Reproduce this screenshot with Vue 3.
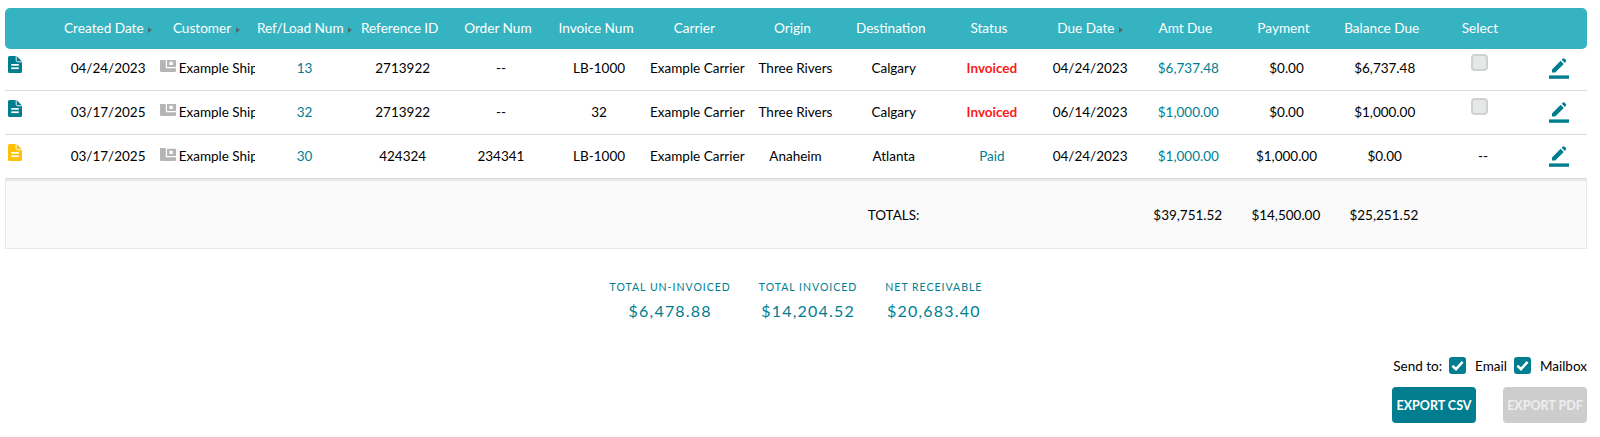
<template>
  <div class="page">
    <div class="ledger">
      <div class="row head">
        <div v-for="col in columns" :key="col.label" class="cell" :class="{ plain: !col.sort }">
          {{ col.label }}<span v-if="col.sort" class="sort"></span>
        </div>
      </div>
      <div v-for="row in rows" :key="row.ref" class="row body">
        <div class="cell doc-cell">
          <svg class="doc" :class="{ paid: row.status === 'Paid' }" viewBox="0 0 14 17">
            <path d="M1.5 0H8.6L14 5.4V15.5A1.5 1.5 0 0 1 12.5 17H1.5A1.5 1.5 0 0 1 0 15.5V1.5A1.5 1.5 0 0 1 1.5 0Z" fill="currentColor" />
            <path d="M8.2 0V4.4A1.4 1.4 0 0 0 9.6 5.8H14" fill="none" stroke="#fff" stroke-width="0.9" />
            <rect x="3.2" y="8" width="7.6" height="1.7" fill="#fff" />
            <rect x="3.2" y="11.4" width="7.6" height="1.7" fill="#fff" />
          </svg>
        </div>
        <div class="cell">{{ row.created }}</div>
        <div class="cell customer">
          <svg class="wallet" viewBox="0 0 16 16">
            <rect width="16" height="16" rx="1.2" fill="#b5b5b5" />
            <path d="M16 3.2H6.4V11.6H16" fill="none" stroke="#fff" stroke-width="1.2" />
            <rect x="9.4" y="5.8" width="3.4" height="3.2" fill="#fff" />
          </svg>
          <span class="ship">Example Shipper</span>
        </div>
        <div class="cell teal">{{ row.ref }}</div>
        <div class="cell">{{ row.referenceId }}</div>
        <div class="cell">{{ row.order }}</div>
        <div class="cell">{{ row.invoice }}</div>
        <div class="cell">Example Carrier</div>
        <div class="cell">{{ row.origin }}</div>
        <div class="cell">{{ row.destination }}</div>
        <div class="cell" :class="row.status === 'Paid' ? 'teal' : 'invoiced'">{{ row.status }}</div>
        <div class="cell">{{ row.due }}</div>
        <div class="cell teal">{{ row.amount }}</div>
        <div class="cell">{{ row.payment }}</div>
        <div class="cell">{{ row.balance }}</div>
        <div class="cell">
          <span v-if="row.selectable" class="select-box"></span>
          <span v-else>--</span>
        </div>
        <div class="cell">
          <svg class="edit" viewBox="0 0 20 21">
            <path d="M3 14.6V11.4L11.6 2.8L14.8 6L6.2 14.6ZM12.7 1.7L13.9 .5A1 1 0 0 1 15.3 .5L16.9 2.1A1 1 0 0 1 16.9 3.5L15.9 4.9Z" fill="currentColor" />
            <rect y="17.4" width="20" height="3.4" fill="currentColor" />
          </svg>
        </div>
      </div>
      <div class="row totals">
        <div class="total-label">TOTALS:</div>
        <div class="cell total-amt">$39,751.52</div>
        <div class="cell">$14,500.00</div>
        <div class="cell">$25,251.52</div>
      </div>
    </div>

    <div class="summary">
      <div v-for="item in summary" :key="item.label" class="stat">
        <div class="stat-label">{{ item.label }}</div>
        <div class="stat-value">{{ item.value }}</div>
      </div>
    </div>

    <div class="send">
      <span>Send to:</span>
      <span class="check"><svg viewBox="0 0 16 16"><path d="M3.2 8.2L6.6 11.4L12.8 4.6" fill="none" stroke="#fff" stroke-width="2.4" /></svg></span>
      <span class="opt">Email</span>
      <span class="check"><svg viewBox="0 0 16 16"><path d="M3.2 8.2L6.6 11.4L12.8 4.6" fill="none" stroke="#fff" stroke-width="2.4" /></svg></span>
      <span class="opt">Mailbox</span>
    </div>
    <div class="actions">
      <button class="btn">EXPORT CSV</button>
      <button class="btn off">EXPORT PDF</button>
    </div>
  </div>
</template>

<script setup>
const columns = [
  { label: '' },
  { label: 'Created Date', sort: true },
  { label: 'Customer', sort: true },
  { label: 'Ref/Load Num', sort: true },
  { label: 'Reference ID' },
  { label: 'Order Num' },
  { label: 'Invoice Num' },
  { label: 'Carrier' },
  { label: 'Origin' },
  { label: 'Destination' },
  { label: 'Status' },
  { label: 'Due Date', sort: true },
  { label: 'Amt Due' },
  { label: 'Payment' },
  { label: 'Balance Due' },
  { label: 'Select' },
  { label: ' ' },
];

const rows = [
  {
    created: '04/24/2023', ref: '13', referenceId: '2713922', order: '--', invoice: 'LB-1000',
    origin: 'Three Rivers', destination: 'Calgary', status: 'Invoiced', due: '04/24/2023',
    amount: '$6,737.48', payment: '$0.00', balance: '$6,737.48', selectable: true,
  },
  {
    created: '03/17/2025', ref: '32', referenceId: '2713922', order: '--', invoice: '32',
    origin: 'Three Rivers', destination: 'Calgary', status: 'Invoiced', due: '06/14/2023',
    amount: '$1,000.00', payment: '$0.00', balance: '$1,000.00', selectable: true,
  },
  {
    created: '03/17/2025', ref: '30', referenceId: '424324', order: '234341', invoice: 'LB-1000',
    origin: 'Anaheim', destination: 'Atlanta', status: 'Paid', due: '04/24/2023',
    amount: '$1,000.00', payment: '$1,000.00', balance: '$0.00', selectable: false,
  },
];

const summary = [
  { label: 'TOTAL UN-INVOICED', value: '$6,478.88' },
  { label: 'TOTAL INVOICED', value: '$14,204.52' },
  { label: 'NET RECEIVABLE', value: '$20,683.40' },
];
</script>

<style>
body {
  margin: 0;
  background: #fff;
}
</style>

<style scoped>
.page {
  width: 1600px;
  height: 437px;
  padding: 8px 13px 0 5px;
  box-sizing: border-box;
  font-family: Lato, sans-serif;
  font-size: 13.5px;
  color: #000;
  overflow: hidden;
}

.row {
  display: grid;
  grid-template-columns: 54px repeat(15, 1fr) 55px;
  align-items: center;
}

.cell {
  text-align: center;
  white-space: nowrap;
}

.head {
  height: 41px;
  margin-bottom: -2.5px;
  padding-bottom: 2px;
  box-sizing: border-box;
  background: #35b3c1;
  border-radius: 5px;
  color: #fff;
  font-size: 13.6px;
}

.head .plain {
  padding-right: 6px;
}

.sort {
  display: inline-block;
  margin-left: 4.5px;
  border-left: 4px solid #4c6d75;
  border-top: 3px solid transparent;
  border-bottom: 3px solid transparent;
  vertical-align: 0;
}

.body {
  height: 44.3px;
  padding-bottom: 1px;
  border-bottom: 1px solid #dcdcdc;
  box-sizing: border-box;
}

.doc-cell {
  text-align: left;
  padding-left: 3px;
}

.doc {
  display: block;
  width: 14px;
  height: 17px;
  margin-top: -7px;
  color: #007e8f;
}

.doc.paid {
  color: #ffc107;
}

.customer {
  display: flex;
  align-items: center;
  gap: 2.5px;
  padding-left: 3px;
  overflow: hidden;
}

.wallet {
  width: 16px;
  height: 16px;
  flex: none;
  margin-top: -7px;
}

.ship {
  width: 78px;
  overflow: hidden;
}

.teal {
  color: #007e8f;
}

.invoiced {
  color: #fb1a1a;
  font-weight: 700;
}

.select-box {
  display: block;
  width: 13px;
  height: 13px;
  margin: -11px auto 0;
  position: relative;
  left: -3px;
  background: #e6e8e8;
  border: 2px solid #cfd1d1;
  border-radius: 4px;
}

.edit {
  display: block;
  width: 20px;
  height: 21px;
  margin: 1px auto 0;
  color: #007e8f;
}

.totals {
  height: 70px;
  background: #fafafa;
  border: 1px solid #e8e8e8;
  border-top-width: 2px;
  box-sizing: border-box;
}

.total-label {
  grid-column: 10;
  text-align: center;
}

.total-amt {
  grid-column: 13;
}

.summary {
  display: flex;
  justify-content: center;
  gap: 28px;
  margin-top: 31px;
}

.stat {
  text-align: center;
  color: #007e8f;
}

.stat-label {
  font-size: 10.5px;
  letter-spacing: 1px;
  line-height: 14px;
}

.stat-value {
  font-size: 16px;
  letter-spacing: 1.2px;
  line-height: 20px;
  margin-top: 7px;
}

.send {
  display: flex;
  justify-content: flex-end;
  align-items: center;
  gap: 7px;
  height: 17px;
  margin-top: 36px;
}

.check {
  display: block;
  width: 17px;
  height: 17px;
  background: #007e8f;
  border-radius: 3px;
}

.check svg {
  display: block;
  width: 17px;
  height: 17px;
}

.opt {
  margin-left: 2px;
}

.actions {
  display: flex;
  justify-content: flex-end;
  gap: 27px;
  margin-top: 13px;
}

.btn {
  width: 84px;
  height: 36px;
  padding: 0;
  border: none;
  border-radius: 4px;
  background: #007e8f;
  color: #fff;
  font-family: Lato, sans-serif;
  font-size: 12.5px;
  font-weight: 700;
}

.btn.off {
  background: #cdcdcd;
  color: #eee;
}
</style>
